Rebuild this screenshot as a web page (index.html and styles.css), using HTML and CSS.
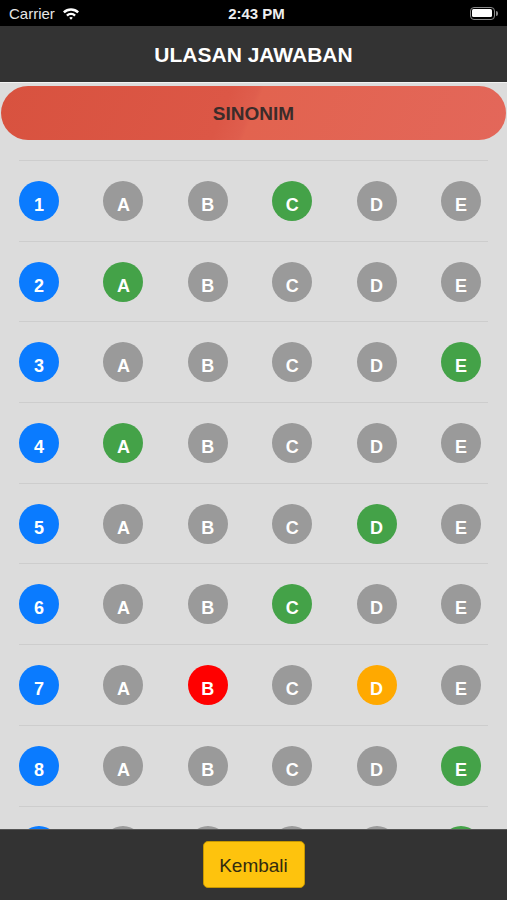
FILE: index.html
```html
<!DOCTYPE html>
<html lang="id">

<head>
    <meta charset="UTF-8">
    <meta name="viewport" content="width=device-width, initial-scale=1.0">
    <title>Ulasan Jawaban</title>
    <link rel="stylesheet" href="styles.css">
</head>

<body>
    <div class="status">
        <div class="status-left">
            <span>Carrier</span>
            <svg class="wifi" width="18" height="13" viewBox="0 0 18 13">
                <path d="M1 4.6 A11.5 11.5 0 0 1 17 4.6 L15.3 6.3 A9 9 0 0 0 2.7 6.3 Z" fill="#fff"/>
                <path d="M4.1 7.7 A7 7 0 0 1 13.9 7.7 L12.2 9.4 A4.6 4.6 0 0 0 5.8 9.4 Z" fill="#fff"/>
                <path d="M7.2 10.8 A2.6 2.6 0 0 1 10.8 10.8 L9 12.7 Z" fill="#fff"/>
            </svg>
        </div>
        <div class="status-time">2:43 PM</div>
        <div class="status-right">
            <div class="battery"><div class="battery-fill"></div></div>
            <div class="battery-nub"></div>
        </div>
    </div>

    <div class="header">ULASAN JAWABAN</div>

    <div class="content">
        <div class="section">SINONIM</div>
        <div class="list" id="list"></div>
    </div>

    <div class="footer">
        <button class="btn-back">Kembali</button>
    </div>

    <script>
        // jawaban: huruf -> warna
        let answers = [
            { c: "green" },
            { a: "green" },
            { e: "green" },
            { a: "green" },
            { d: "green" },
            { c: "green" },
            { b: "red", d: "orange" },
            { e: "green" },
            { e: "green" }
        ];
        let letters = ["a", "b", "c", "d", "e"];
        let list = document.getElementById("list");

        answers.forEach((ans, i) => {
            let row = document.createElement("div");
            row.className = "row";
            let html = '<span class="dot blue">' + (i + 1) + '</span>';
            letters.forEach((l) => {
                let color = ans[l] ? ans[l] : "gray";
                html += '<span class="dot ' + color + '">' + l.toUpperCase() + '</span>';
            });
            row.innerHTML = html;
            list.appendChild(row);
        });
    </script>
</body>

</html>
```

FILE: styles.css
```css
* {
    box-sizing: border-box;
}

body {
    margin: 0;
    padding: 0;
    width: 507px;
    height: 900px;
    display: flex;
    flex-direction: column;
    overflow: hidden;
    background: #dcdcdc;
    font-family: 'Liberation Sans', Arial, sans-serif;
}

.status {
    height: 26px;
    background: #000;
    color: #e6e6e6;
    display: flex;
    align-items: center;
    justify-content: space-between;
    padding: 0 9px 0 9px;
    font-size: 15px;
}

.status-left {
    width: 120px;
    display: flex;
    align-items: center;
    gap: 7px;
}

.status-time {
    font-weight: bold;
    color: #eee;
    margin-left: 6px;
}

.status-right {
    width: 120px;
    display: flex;
    align-items: center;
    justify-content: flex-end;
}

.battery {
    width: 25px;
    height: 13px;
    border: 1.5px solid #8a8a8a;
    border-radius: 4px;
    padding: 1.5px;
}

.battery-fill {
    width: 100%;
    height: 100%;
    background: #fff;
    border-radius: 1.5px;
}

.battery-nub {
    width: 2px;
    height: 5px;
    background: #8a8a8a;
    border-radius: 0 2px 2px 0;
    margin-left: 1px;
}

.header {
    height: 57px;
    background: #333333;
    color: #fff;
    font-size: 21px;
    font-weight: bold;
    display: flex;
    align-items: center;
    justify-content: center;
    padding-top: 1px;
    border-bottom: 1px solid #f2f2f2;
}

.content {
    flex: 1;
    overflow: hidden;
}

.section {
    margin: 3px 1px 0 1px;
    height: 54px;
    border-radius: 27px;
    background: linear-gradient(112deg, #d8523f 0%, #dc5746 44%, #df5e4d 49%, #e2634f 50%, #e3675a 100%);
    color: #3b2c2a;
    font-size: 19px;
    font-weight: bold;
    display: flex;
    align-items: center;
    justify-content: center;
    padding-top: 2px;
}

.list {
    margin-top: 20px;
}

.row {
    margin: 0 19px;
    padding-right: 7px;
    height: 80.7px;
    border-top: 1px solid #cdcdcd;
    display: flex;
    align-items: center;
    justify-content: space-between;
}

.dot {
    width: 40px;
    height: 40px;
    border-radius: 50%;
    color: #fff;
    font-size: 18px;
    font-weight: bold;
    display: flex;
    align-items: center;
    justify-content: center;
    padding-top: 9px;
}

.blue {
    background: #0a7bff;
}

.gray {
    background: #9a9a9a;
}

.green {
    background: #44a248;
}

.red {
    background: #ff0000;
}

.orange {
    background: #ffa900;
}

.footer {
    height: 71px;
    background: #333333;
    border-top: 1px solid #555;
    display: flex;
    justify-content: center;
    padding-top: 11px;
}

.btn-back {
    width: 102px;
    height: 47px;
    background: #fec30d;
    border: 1px solid #c79700;
    border-radius: 5px;
    color: #332b10;
    font-family: 'Liberation Sans', Arial, sans-serif;
    font-size: 19px;
    padding: 2px 0 0 0;
    cursor: pointer;
}
```
